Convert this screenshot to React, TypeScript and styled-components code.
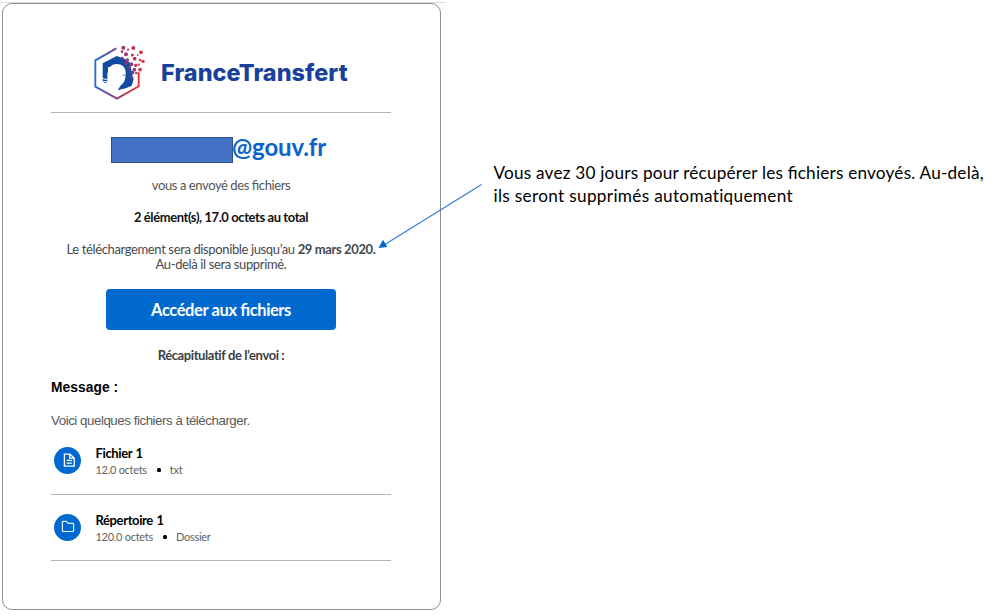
import React from 'react';
import styled, { createGlobalStyle } from 'styled-components';

const GlobalStyle = createGlobalStyle`
  body {
    margin: 0;
    background: #fff;
    font-family: Lato, Carlito, sans-serif;
    font-feature-settings: 'liga' 1;
  }
`;

const Page = styled.div`
  position: relative;
  display: flex;
  align-items: flex-start;
  width: 995px;
  height: 616px;
  overflow: hidden;
  box-sizing: border-box;
`;

const MailColumn = styled.div`
  width: 446px;
  flex: none;
  box-sizing: border-box;
  margin-top: 2px;
  border-top: 1px solid #dcdcdc;
`;

const Card = styled.main`
  box-sizing: border-box;
  width: 439px;
  height: 607px;
  margin-left: 2px;
  padding: 32px 49px 0 48px;
  border: 1px solid #8e8e8e;
  border-radius: 10px;
`;

const Header = styled.header`
  display: flex;
  align-items: flex-start;
  height: 76px;
  padding-left: 29px;
  border-bottom: 1px solid #b4b4b4;
`;

const Brand = styled.h1`
  margin: 22px 0 0 1px;
  font: 800 23.4px/30px Inter, sans-serif;
  letter-spacing: 0.06px;
  color: #19419a;
  white-space: nowrap;
`;

const Sender = styled.div`
  display: flex;
  align-items: flex-start;
  height: 28px;
  margin: 20px 0 16px 60px;
  font-size: 24px;
  line-height: 28px;
  font-weight: 700;
  letter-spacing: -0.15px;
  color: #0b63cb;
`;

const Redaction = styled.span`
  box-sizing: border-box;
  flex: none;
  width: 122px;
  height: 26px;
  margin: 4px -1px 0 0;
  border: 1px solid #2f528f;
  background: #4472c4;
`;

const Line = styled.p<{ $top?: number; $color?: string; $bold?: boolean; $plain?: boolean }>`
  margin: ${(p) => p.$top ?? 0}px 0 0;
  font-size: 13px;
  line-height: 16px;
  letter-spacing: -0.41px;
  text-align: center;
  white-space: nowrap;
  font-weight: ${(p) => (p.$bold ? 700 : 400)};
  font-feature-settings: 'liga' ${(p) => (p.$plain ? 0 : 1)};
  color: ${(p) => p.$color ?? '#555'};
`;

const Expiry = styled(Line)`
  line-height: 14.5px;
  letter-spacing: -0.37px;
  color: #45494f;
  height: 29px;
`;

const AccessButton = styled.button`
  display: block;
  width: 230px;
  height: 41px;
  margin: 18px auto 0 55px;
  padding: 1px 0 0;
  border: 0;
  border-radius: 4px;
  background: #0069cf;
  color: #fff;
  font: 700 16.5px/40px Lato, sans-serif;
  font-feature-settings: 'liga' 1;
  letter-spacing: -0.4px;
`;

const MessageTitle = styled.h2`
  margin: 17px 0 0;
  font: 700 13.8px/16px 'Liberation Sans', sans-serif;
  letter-spacing: 0.05px;
  color: #000;
`;

const MessageBody = styled.p`
  margin: 17px 0 0;
  font: 400 13.3px/16px 'Liberation Sans', sans-serif;
  letter-spacing: -0.45px;
  color: #5a5a5a;
`;

const FileList = styled.div`
  margin-top: -1px;
`;

const FileRow = styled.div`
  display: flex;
  align-items: flex-start;
  box-sizing: border-box;
  height: 66px;
  padding: 17px 0 0 3px;
  border-bottom: 1px solid #b4b4b4;
  &:first-child {
    height: 67px;
  }
`;

const FileBadge = styled.span`
  display: flex;
  flex: none;
  align-items: center;
  justify-content: center;
  width: 27px;
  height: 27px;
  margin-top: 1.5px;
  border-radius: 50%;
  background: #0069cf;
`;

const FileInfo = styled.div`
  margin-left: 14.5px;
`;

const FileName = styled.div`
  font-size: 13px;
  line-height: 17px;
  font-weight: 700;
  letter-spacing: -0.38px;
  word-spacing: 0.8px;
  color: #000;
`;

const FileMeta = styled.div`
  display: flex;
  align-items: center;
  font-size: 11px;
  line-height: 16px;
  letter-spacing: -0.28px;
  color: #5f5f5f;
`;

const Dot = styled.span`
  width: 4px;
  height: 4px;
  margin: 0 9px 0 10px;
  border-radius: 1.5px;
  background: #000;
`;

const Note = styled.aside`
  margin: 160.5px 0 0 47.5px;
  font-size: 17.2px;
  line-height: 23px;
  color: #000;
  white-space: nowrap;
`;

const NoteLine = styled.div<{ $tracking: number; $plain?: boolean }>`
  letter-spacing: ${(p) => p.$tracking}px;
  font-feature-settings: 'liga' ${(p) => (p.$plain ? 0 : 1)};
`;

const ArrowOverlay = styled.svg`
  position: absolute;
  left: 370px;
  top: 175px;
`;

const particles: [number, number, number, string][] = [
  [130, 35, 6, '#a52f68'], [144, 41, 3.5, '#c24468'], [160, 36, 6, '#c33357'], [183, 49, 5.5, '#e0273f'],
  [126, 47, 4, '#8c3675'], [138, 55, 6, '#9c3971'], [157, 57, 4.5, '#ba365e'], [173, 57, 3, '#d65062'],
  [127, 66, 4, '#6c3c86'], [142, 72, 5.5, '#953b74'], [164, 68, 5.5, '#b92f5b'], [180, 72, 4, '#d93955'],
  [189, 76, 5, '#e52f44'], [138, 82, 6, '#703984'], [154, 85, 6, '#993772'], [167, 88, 5, '#b33760'],
  [176, 86, 3.5, '#d23854'], [147, 96, 5, '#5b3f91'], [163, 101, 5.5, '#9f376b'], [180, 101, 5.5, '#d3314f'],
  [157, 110, 6, '#55449a'], [169, 111, 4, '#b8426a'], [154, 125, 6, '#3c49a3'],
];

function Logo() {
  return (
    <svg width="80" height="70" viewBox="0 0 240 210" fill="none">
      <defs>
        <linearGradient id="hex" x1="45" y1="100" x2="177" y2="115" gradientUnits="userSpaceOnUse">
          <stop offset="0" stopColor="#2469d8" />
          <stop offset="0.5" stopColor="#854176" />
          <stop offset="0.85" stopColor="#d2324f" />
          <stop offset="1" stopColor="#f12937" />
        </linearGradient>
      </defs>
      <path d="M109 37 46 73v79l65 36 65-37v-42" stroke="url(#hex)" strokeWidth="5.5" />
      <path
        d="M68 82 110 60 133 68 150 80 156 117 161 130 155 149 137 157 113 163 120 151 126 140 130 123 127 105 124 88 84 94 84 139 74 141 68 136Z"
        fill="#124b9f"
      />
      <path
        d="M82 122c0-24 10-38 28-38 16 0 26 9 27 24l-1 18-4 12-12 13-8 12-22-2-8-16Z"
        fill="#fff"
      />
      <path d="M66 126c7 5 12 2 20 7M70 136l14 2" stroke="#fff" strokeWidth="3" />
      <path d="m127 117 8 1" stroke="#77968d" strokeWidth="3" />
      {particles.map(([x, y, r, fill]) => (
        <circle key={`${x}-${y}`} cx={x} cy={y} r={r} fill={fill} />
      ))}
    </svg>
  );
}

function DocumentIcon() {
  return (
    <svg width="14" height="14" viewBox="0 0 14 14" fill="none" stroke="#fff" strokeWidth="1.3">
      <path d="M3 1h5.6L12.8 4.8V13H3ZM8.3 1v4h4.5M5.2 7.2h5.4M5.2 9.9h5.4" transform="translate(0.4 .2)" />
    </svg>
  );
}

function FolderIcon() {
  return (
    <svg width="14" height="14" viewBox="0 0 14 14" fill="none" stroke="#e9f5ff" strokeWidth="1.2" strokeLinejoin="round">
      <path d="M1.4 2.2q0-.9.9-.9h3.1l1.8 2h4.5q.9 0 .9.9v6.4q0 .9-.9.9H2.3q-.9 0-.9-.9Z" />
    </svg>
  );
}

const files = [
  { name: 'Fichier 1', size: '12.0 octets', type: 'txt', icon: <DocumentIcon /> },
  { name: 'Répertoire 1', size: '120.0 octets', type: 'Dossier', icon: <FolderIcon /> },
];

export default function App() {
  return (
    <>
      <GlobalStyle />
      <Page>
        <MailColumn>
          <Card>
            <Header>
              <Logo />
              <Brand>FranceTransfert</Brand>
            </Header>
            <Sender>
              <Redaction />
              <span>@gouv.fr</span>
            </Sender>
            <Line>vous a envoyé des fichiers</Line>
            <Line $top={16} $bold $color="#111">2 élément(s), 17.0 octets au total</Line>
            <Expiry $top={17}>
              Le téléchargement sera disponible jusqu’au <b>29 mars 2020.</b>
              <br />
              Au-delà il sera supprimé.
            </Expiry>
            <AccessButton>Accéder aux fichiers</AccessButton>
            <Line $top={17} $bold $plain $color="#3c4045">Récapitulatif de l’envoi :</Line>
            <MessageTitle>Message :</MessageTitle>
            <MessageBody>Voici quelques fichiers à télécharger.</MessageBody>
            <FileList>
              {files.map((f) => (
                <FileRow key={f.name}>
                  <FileBadge>{f.icon}</FileBadge>
                  <FileInfo>
                    <FileName>{f.name}</FileName>
                    <FileMeta>
                      {f.size}
                      <Dot />
                      {f.type}
                    </FileMeta>
                  </FileInfo>
                </FileRow>
              ))}
            </FileList>
          </Card>
        </MailColumn>
        <Note>
          <NoteLine $tracking={0.2}>Vous avez 30 jours pour récupérer les fichiers envoyés. Au-delà,</NoteLine>
          <NoteLine $tracking={0.32} $plain>ils seront supprimés automatiquement</NoteLine>
        </Note>
        <ArrowOverlay width="115" height="78" viewBox="0 0 115 78">
          <path d="M111.5 9.5 14 70" stroke="#2b7cd6" strokeWidth="1.1" />
          <path d="M8.5 73 13 64.8l4.4 7.2Z" fill="#0069cf" />
        </ArrowOverlay>
      </Page>
    </>
  );
}
